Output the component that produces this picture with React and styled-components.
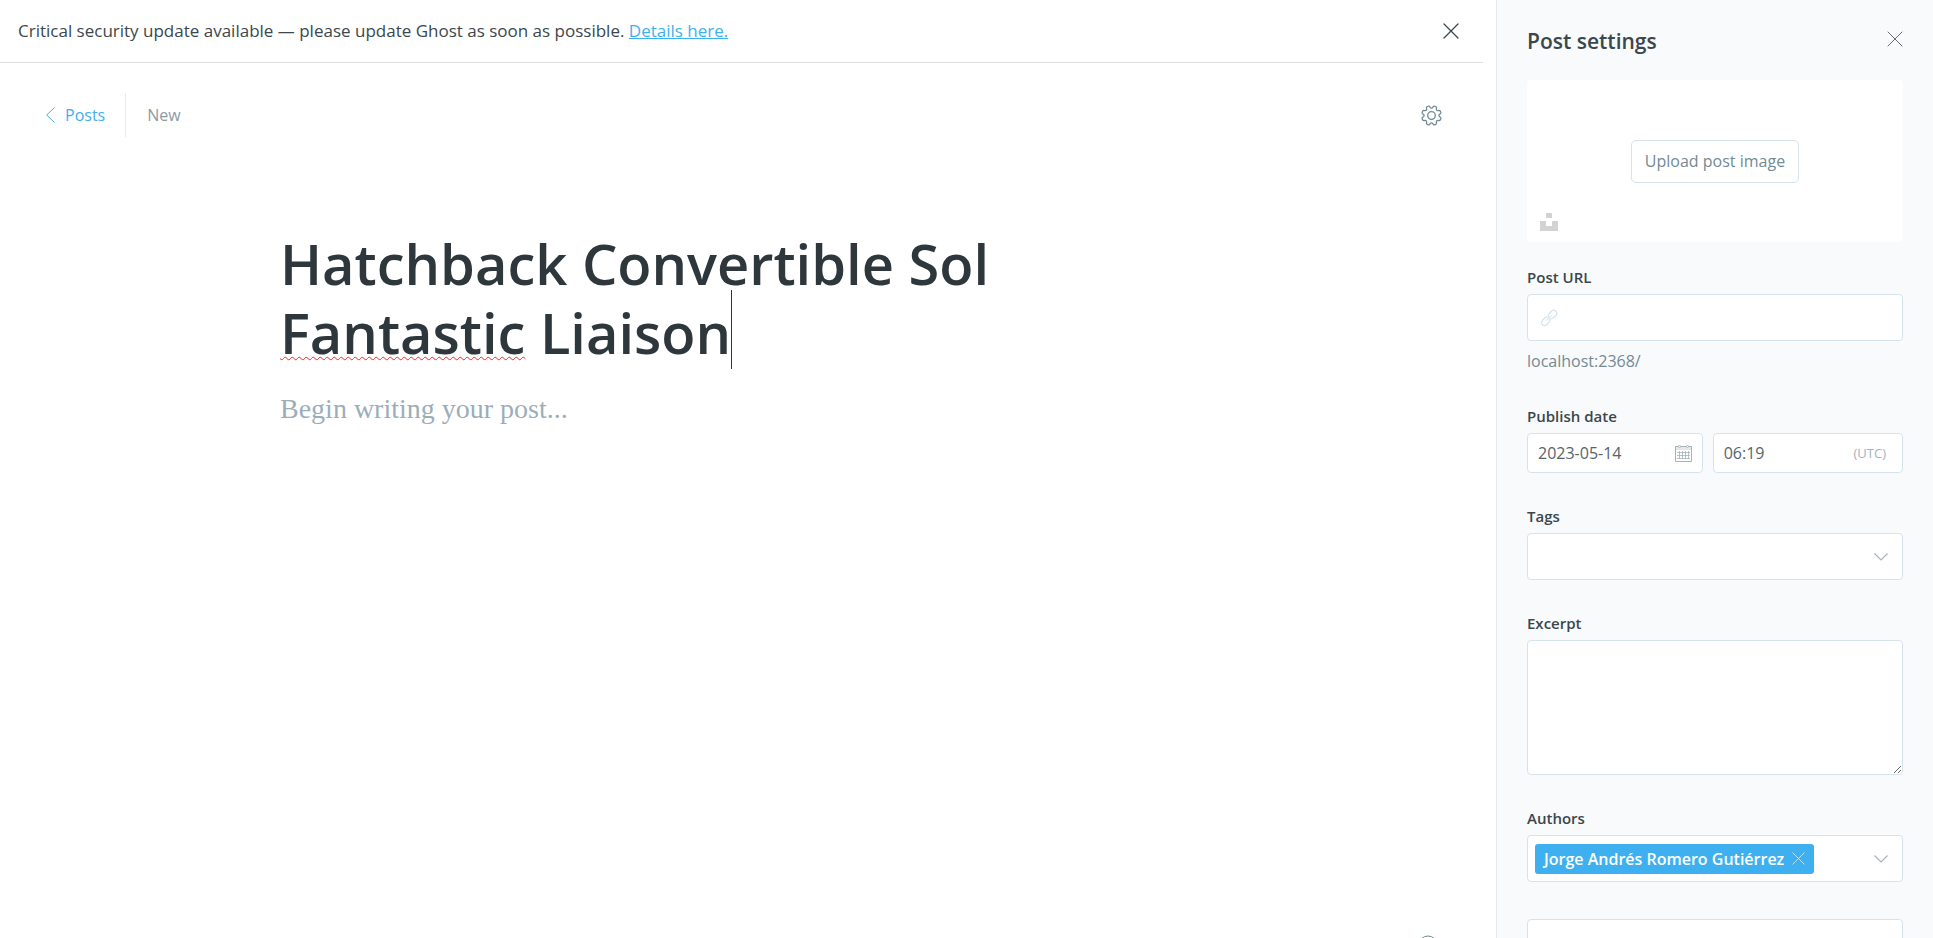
import React from "react";
import styled, { createGlobalStyle, css } from "styled-components";

const color = {
  ink: "#2e373b",
  text: "#3b474c",
  muted: "#738a94",
  pale: "#a4b4bc",
  border: "#d5e3ec",
  blue: "#3eb0ef",
  panel: "#f8fafc",
};

const GlobalStyle = createGlobalStyle`
  *, *::before, *::after { box-sizing: border-box; }
  body {
    margin: 0;
    background: #fff;
    color: ${color.text};
    font: 16px/20px "Open Sans", "Noto Sans", sans-serif;
  }
  button, input, select, textarea { font: inherit; color: inherit; }
  svg { display: block; }
`;

const Page = styled.div`
  display: flex;
  height: 100vh;
  overflow: hidden;
`;

const Main = styled.main`
  flex: 1;
  min-width: 0;
  display: flex;
  flex-direction: column;
`;

const Banner = styled.div`
  display: flex;
  align-items: center;
  justify-content: space-between;
  height: 63px;
  margin-right: 13px;
  padding: 0 24px 0 18px;
  border-bottom: 1px solid #dcdfe1;
  font-size: 17px;
  line-height: 24px;
`;

const BannerLink = styled.a`
  color: ${color.blue};
  text-decoration: underline;
`;

const IconButton = styled.button`
  display: flex;
  padding: 0;
  border: 0;
  background: none;
  cursor: pointer;
  color: ${(p) => p.$color || color.text};
`;

const EditorHeader = styled.header`
  display: flex;
  align-items: center;
  justify-content: space-between;
  padding: 30px 54px 0 46px;
`;

const Breadcrumb = styled.nav`
  display: flex;
  align-items: center;
  height: 44px;
`;

const BackLink = styled.a`
  display: flex;
  align-items: center;
  gap: 10px;
  height: 100%;
  padding-right: 20px;
  border-right: 1px solid #e3edf2;
  color: ${color.blue};
  text-decoration: none;
`;

const Status = styled.span`
  padding-left: 21px;
  color: #8a9ba3;
`;

const Editor = styled.section`
  flex: 1;
  display: flex;
  flex-direction: column;
  width: 100%;
  max-width: 936px;
  margin: 0 auto;
  padding-top: 92px;
`;

const Title = styled.h1`
  margin: 0;
  color: ${color.ink};
  font-size: 56px;
  font-weight: 600;
  line-height: 69px;
  outline: none;
`;

const Misspelled = styled.span`
  text-decoration: underline wavy #f22 1px;
  text-decoration-skip-ink: none;
  text-underline-offset: 2px;
`;

const Caret = styled.span`
  position: relative;
  &::after {
    content: "";
    position: absolute;
    left: 0;
    bottom: 1px;
    width: 1px;
    height: 79px;
    background: ${color.ink};
  }
`;

const Body = styled.textarea`
  flex: 1;
  margin: 0;
  padding: 26px 0 0;
  border: 0;
  outline: none;
  resize: none;
  background: none;
  font-family: "Liberation Serif", serif;
  font-size: 28px;
  line-height: 32px;
  &::placeholder { color: #9baeb8; opacity: 1; }
`;

const EditorFooter = styled.footer`
  display: flex;
  justify-content: flex-end;
  height: 3px;
  padding-right: 58px;
`;

const Sidebar = styled.aside`
  flex: 0 0 437px;
  padding: 31px 30px 0;
  border-left: 1px solid #e3ebf1;
  background: ${color.panel};
  overflow-y: auto;
  scrollbar-width: none;
`;

const SidebarHeader = styled.header`
  display: flex;
  align-items: flex-start;
  justify-content: space-between;
  height: 49px;
`;

const SidebarTitle = styled.h2`
  margin: 0;
  color: ${color.text};
  font-size: 21px;
  font-weight: 600;
  line-height: 20px;
`;

const Uploader = styled.div`
  position: relative;
  display: flex;
  align-items: center;
  justify-content: center;
  height: 162px;
  margin-bottom: 25px;
  border-radius: 4px;
  background: #fff;
`;

const UploadButton = styled.button`
  height: 43px;
  padding: 0 13px;
  border: 1px solid ${color.border};
  border-radius: 5px;
  background: #fff;
  color: ${color.muted};
  cursor: pointer;
`;

const UnsplashButton = styled(IconButton)`
  position: absolute;
  left: 13px;
  bottom: 11px;
`;

const Field = styled.div`
  margin-bottom: 33px;
`;

const Label = styled.label`
  display: block;
  margin-bottom: 7px;
  color: ${color.text};
  font-size: 15px;
  font-weight: 600;
`;

const box = css`
  border: 1px solid ${color.border};
  border-radius: 4px;
  background: #fff;
`;

const InputBox = styled.div`
  ${box}
  display: flex;
  align-items: center;
  gap: 8px;
  min-width: 0;
  height: ${(p) => (p.$compact ? 40 : 47)}px;
  padding: ${(p) => p.$pad || "0 10px"};
  color: ${(p) => p.$color || color.pale};
`;

const Input = styled.input`
  flex: 1;
  min-width: 0;
  padding: 0;
  border: 0;
  outline: none;
  background: none;
  color: #55646b;
`;

const Hint = styled.p`
  margin: 10px 0 35px;
  color: ${color.muted};
`;

const DateRow = styled.div`
  display: grid;
  grid-template-columns: minmax(0, 12fr) minmax(0, 13fr);
  gap: 10px;
`;

const Timezone = styled.span`
  font-size: 13px;
  font-weight: 400;
`;

const SelectWrap = styled.div`
  display: grid;
  align-items: center;
  color: ${color.pale};
  > * { grid-area: 1 / 1; }
  > svg { justify-self: end; margin-right: 15px; pointer-events: none; }
`;

const Select = styled.select`
  ${box}
  appearance: none;
  width: 100%;
  height: 47px;
  padding: 0 10px;
`;

const Excerpt = styled.textarea`
  ${box}
  display: block;
  width: 100%;
  height: 135px;
  padding: 10px;
  resize: vertical;
`;

const Token = styled.span`
  display: flex;
  align-items: center;
  gap: 8px;
  height: 30px;
  padding: 0 9px;
  border-radius: 3px;
  background: ${color.blue};
  color: #fff;
  font-weight: 600;
  white-space: nowrap;
`;

const MetaButton = styled.button`
  ${box}
  display: block;
  width: 100%;
  margin-top: 37px;
  padding: 14px 15px;
  color: ${color.text};
  font-size: 15px;
  font-weight: 600;
  text-align: left;
`;

const Cross = ({ size = 16, weight = 1 }) => (
  <svg width={size} height={size} viewBox="0 0 16 16" fill="none" stroke="currentColor" strokeWidth={weight} strokeLinecap="round" aria-hidden="true">
    <path d="M1 1l14 14M15 1L1 15" />
  </svg>
);

const ChevronLeft = () => (
  <svg width="9" height="16" viewBox="0 0 9 16" fill="none" stroke="currentColor" aria-hidden="true">
    <path d="M8.500.500L.700 8l7.800 7.500" />
  </svg>
);

const ChevronDown = () => (
  <svg width="14" height="8" viewBox="0 0 14 8" fill="none" stroke="currentColor" strokeWidth="1.200" aria-hidden="true">
    <path d="M.500.500L7 7l6.500-6.500" />
  </svg>
);

// Eight teeth, with a notch on each axis and on each diagonal.
const gearPath = (() => {
  const at = (deg, r) => {
    const a = (deg * Math.PI) / 180;
    return `${(10.5 + r * Math.sin(a)).toFixed(2)} ${(10.5 - r * Math.cos(a)).toFixed(2)}`;
  };
  let d = "";
  for (let k = 0; k < 8; k += 1) {
    const c = 22.5 + k * 45;
    d += `${k ? "L" : "M"}${at(c - 15, 7.9)}L${at(c - 10, 9.4)}Q${at(c - 7, 10)} ${at(c, 9.9)}Q${at(c + 7, 10)} ${at(c + 10, 9.4)}L${at(c + 15, 7.9)}Q${at(c + 22.5, 7)} ${at(c + 30, 7.9)}`;
  }
  return `${d}Z`;
})();

const Gear = () => (
  <svg width="21" height="21" viewBox="0 0 21 21" fill="none" stroke="currentColor" strokeWidth="1.300" strokeLinejoin="round" aria-hidden="true">
    <path d={gearPath} />
    <circle cx="10.500" cy="10.500" r="3.800" />
  </svg>
);

const Unsplash = () => (
  <svg width="18" height="18" viewBox="0 0 18 18" fill="currentColor" aria-hidden="true">
    <path d="M6 0h6v5H6zM0 8h6v5h6V8h6v10H0z" />
  </svg>
);

const LinkIcon = () => (
  <svg width="18" height="18" viewBox="0 0 18 18" fill="none" stroke="currentColor" strokeWidth="1.200" strokeLinecap="round" aria-hidden="true">
    <g transform="rotate(-45 9 9)">
      <path d="M8.500 10.500a3 3 0 0 1-2.500 1.500H2.500a3 3 0 0 1 0-6H6a3 3 0 0 1 2.500 1.500" />
      <path d="M9.500 7.500A3 3 0 0 1 12 6h3.500a3 3 0 0 1 0 6H12a3 3 0 0 1-2.500-1.500" />
      <path d="M6 9h6" />
    </g>
  </svg>
);

const Calendar = () => (
  <svg width="17" height="17" viewBox="0 0 17 17" fill="none" stroke="currentColor" aria-hidden="true">
    <path d="M.500 1.500h16v15H.500z" />
    <path d="M1 3.500h15" strokeWidth="3" opacity=".3" />
    <path d="M4.500 6v8M7.500 6v8M10.500 6v8M13.500 6v8M2 7.500h13M2 10.500h13M2 13.500h13" opacity=".8" />
    <path d="M3 1.500q1.500-2 3 0q-1.500 2-3 0M11 1.500q1.500-2 3 0q-1.500 2-3 0" fill="#fff" />
  </svg>
);

const HelpCircle = () => (
  <svg width="20" height="20" viewBox="0 0 20 20" fill="none" stroke="currentColor" aria-hidden="true">
    <circle cx="10" cy="10" r="9" />
    <path d="M7.500 8a2.500 2.500 0 1 1 2.500 2.500v2M10 14v1" />
  </svg>
);

export default function App() {
  return (
    <>
      <GlobalStyle />
      <Page>
        <Main>
          <Banner role="alert">
            <span>
              Critical security update available — please update Ghost as soon as possible.{" "}
              <BannerLink href="#details">Details here.</BannerLink>
            </span>
            <IconButton aria-label="Dismiss"><Cross weight={1.3} /></IconButton>
          </Banner>
          <EditorHeader>
            <Breadcrumb>
              <BackLink href="#posts"><ChevronLeft />Posts</BackLink>
              <Status>New</Status>
            </Breadcrumb>
            <IconButton aria-label="Settings" $color={color.muted}><Gear /></IconButton>
          </EditorHeader>
          <Editor>
            <Title contentEditable suppressContentEditableWarning spellCheck={false} aria-label="Post title">
              Hatchback Convertible Sol <Misspelled>Fantastic</Misspelled> Liaison<Caret />
            </Title>
            <Body aria-label="Post body" placeholder="Begin writing your post..." />
          </Editor>
          <EditorFooter>
            <IconButton aria-label="Help" $color={color.muted}><HelpCircle /></IconButton>
          </EditorFooter>
        </Main>
        <Sidebar>
          <SidebarHeader>
            <SidebarTitle>Post settings</SidebarTitle>
            <IconButton aria-label="Close settings"><Cross weight={0.8} /></IconButton>
          </SidebarHeader>
          <Uploader>
            <UploadButton>Upload post image</UploadButton>
            <UnsplashButton aria-label="Unsplash" $color="#d3d3d3"><Unsplash /></UnsplashButton>
          </Uploader>
          <Label htmlFor="url">Post URL</Label>
          <InputBox $color={color.border} $pad="0 12px">
            <LinkIcon />
            <Input id="url" />
          </InputBox>
          <Hint>localhost:2368/</Hint>
          <Field>
            <Label htmlFor="date">Publish date</Label>
            <DateRow>
              <InputBox $compact>
                <Input id="date" defaultValue="2023-05-14" />
                <Calendar />
              </InputBox>
              <InputBox $compact $pad="0 16px 0 10px">
                <Input aria-label="Publish time" defaultValue="06:19" />
                <Timezone>(UTC)</Timezone>
              </InputBox>
            </DateRow>
          </Field>
          <Field>
            <Label htmlFor="tags">Tags</Label>
            <SelectWrap>
              <Select id="tags" />
              <ChevronDown />
            </SelectWrap>
          </Field>
          <Field>
            <Label htmlFor="excerpt">Excerpt</Label>
            <Excerpt id="excerpt" />
          </Field>
          <Label htmlFor="authors">Authors</Label>
          <InputBox $pad="0 14px 0 7px">
            <Token>
              Jorge Andrés Romero Gutiérrez
              <IconButton aria-label="Remove author" $color="#cfeafb"><Cross size={13} /></IconButton>
            </Token>
            <Input id="authors" />
            <ChevronDown />
          </InputBox>
          <MetaButton>Meta data</MetaButton>
        </Sidebar>
      </Page>
    </>
  );
}
